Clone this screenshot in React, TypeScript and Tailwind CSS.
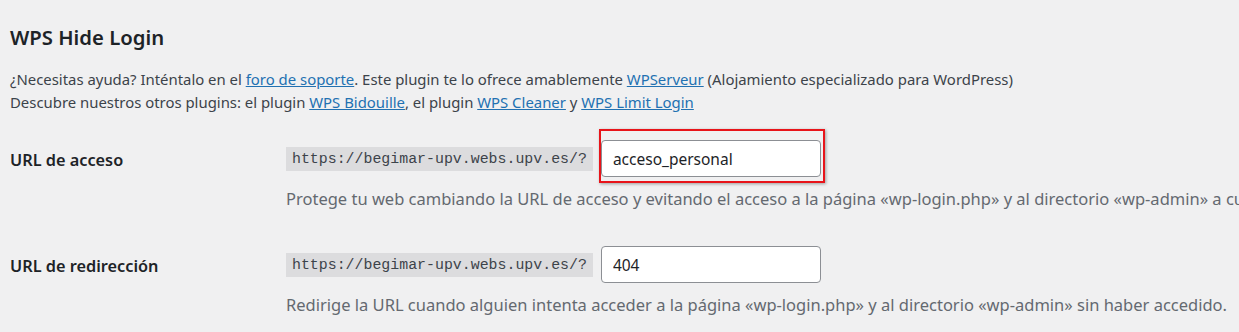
import React from 'react'

const sans = { fontFamily: '"Noto Sans", "Open Sans", sans-serif' }

function Row({
  label,
  value,
  description,
  highlight,
}: {
  label: string
  value: string
  description: string
  highlight?: boolean
}) {
  return (
    <div className="flex">
      <div className="w-[276px] shrink-0 pt-[8px] text-[16.3px] font-semibold text-[#1d2327]">{label}</div>
      <div className="min-w-0 flex-1">
        <div className="flex items-center">
          <code
            className="bg-[#dcdcde] px-[6px] py-[2px] text-[14.9px] leading-[20px] text-[#3c434a]"
            style={{ fontFamily: '"Liberation Mono", monospace' }}
          >
            https://begimar-upv.webs.upv.es/?
          </code>
          <div className="relative ml-[8px]">
            <input
              readOnly
              value={value}
              className="h-[37px] w-[220px] rounded-[4px] border border-[#8c8f94] bg-white px-[11px] text-[15.5px] text-[#1d2327] outline-none"
              style={sans}
            />
            {highlight && (
              <div className="pointer-events-none absolute -top-[11px] -left-[2px] h-[54px] w-[226px] border-2 border-[#e8141a] shadow-[1px_1px_3px_rgba(0,0,0,0.35)]" />
            )}
          </div>
        </div>
        <p className="mt-[11px] whitespace-nowrap text-[16.5px] leading-[22px] text-[#646970]">{description}</p>
      </div>
    </div>
  )
}

export default function App() {
  return (
    <div className="h-[332px] w-[1239px] overflow-hidden bg-[#f0f0f1] pl-[10px] text-[#1d2327]" style={sans}>
      <h2 className="pt-[24px] text-[20.3px] font-semibold leading-[26px]">WPS Hide Login</h2>
      <div className="mt-[18px] text-[14.9px] leading-[23px] text-[#3c434a]">
        <p>
          ¿Necesitas ayuda? Inténtalo en el{' '}
          <a className="text-[#2271b1] underline">foro de soporte</a>. Este plugin te lo ofrece amablemente{' '}
          <a className="text-[#2271b1] underline">WPServeur</a> (Alojamiento especializado para WordPress)
        </p>
        <p>
          Descubre nuestros otros plugins: el plugin <a className="text-[#2271b1] underline">WPS Bidouille</a>, el
          plugin <a className="text-[#2271b1] underline">WPS Cleaner</a> y{' '}
          <a className="text-[#2271b1] underline">WPS Limit Login</a>
        </p>
      </div>
      <div className="mt-[26px] flex flex-col gap-[36px]">
        <Row
          label="URL de acceso"
          value="acceso_personal"
          highlight
          description="Protege tu web cambiando la URL de acceso y evitando el acceso a la página «wp-login.php» y al directorio «wp-admin» a cualquiera."
        />
        <Row
          label="URL de redirección"
          value="404"
          description="Redirige la URL cuando alguien intenta acceder a la página «wp-login.php» y al directorio «wp-admin» sin haber accedido."
        />
      </div>
    </div>
  )
}
